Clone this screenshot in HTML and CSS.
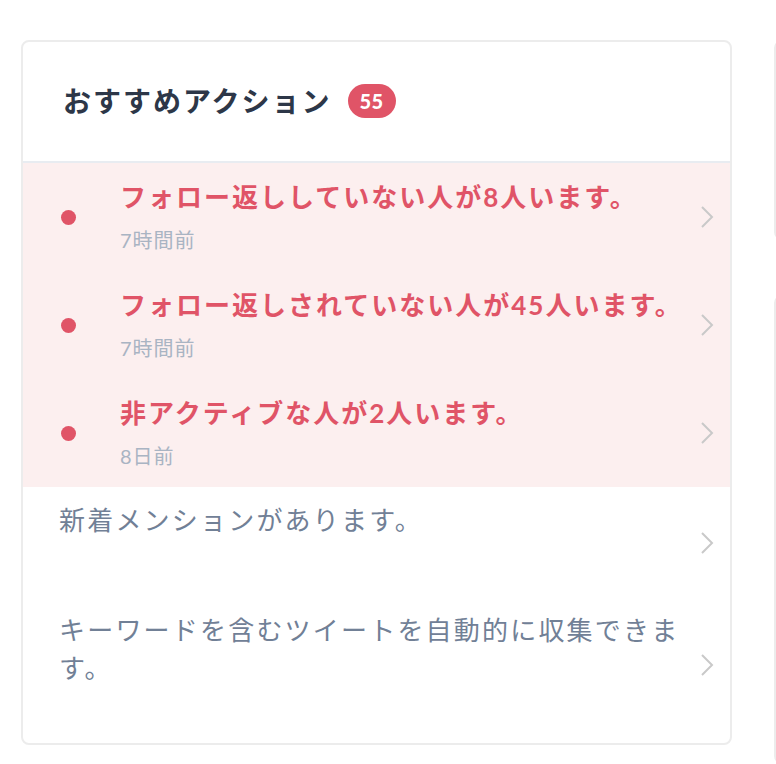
FILE: index.html
```html
<!DOCTYPE html>
<html lang="ja">
<head>
<meta charset="utf-8">
<link rel="stylesheet" href="styles.css">
</head>
<body>
<div class="page">
  <section class="card main">
    <header class="card-head">
      <h2 class="card-title">おすすめアクション</h2>
      <span class="badge">55</span>
    </header>
    <ul class="list">
      <li class="item alert">
        <span class="dot"></span>
        <div class="item-body">
          <div class="item-title">フォロー返ししていない人が8人います。</div>
          <div class="item-time">7時間前</div>
        </div>
        <svg class="chev" width="14" height="24" viewBox="0 0 14 24"><polyline points="2,2 12,12 2,22" fill="none" stroke="#c9c9c9" stroke-width="2"/></svg>
      </li>
      <li class="item alert">
        <span class="dot"></span>
        <div class="item-body">
          <div class="item-title">フォロー返しされていない人が45人います。</div>
          <div class="item-time">7時間前</div>
        </div>
        <svg class="chev" width="14" height="24" viewBox="0 0 14 24"><polyline points="2,2 12,12 2,22" fill="none" stroke="#c9c9c9" stroke-width="2"/></svg>
      </li>
      <li class="item alert">
        <span class="dot"></span>
        <div class="item-body">
          <div class="item-title">非アクティブな人が2人います。</div>
          <div class="item-time">8日前</div>
        </div>
        <svg class="chev" width="14" height="24" viewBox="0 0 14 24"><polyline points="2,2 12,12 2,22" fill="none" stroke="#c9c9c9" stroke-width="2"/></svg>
      </li>
      <li class="item plain short">
        <div class="item-text">新着メンションがあります。</div>
        <svg class="chev" width="14" height="24" viewBox="0 0 14 24"><polyline points="2,2 12,12 2,22" fill="none" stroke="#c9c9c9" stroke-width="2"/></svg>
      </li>
      <li class="item plain tall">
        <div class="item-text">キーワードを含むツイートを自動的に収集できます。</div>
        <svg class="chev" width="14" height="24" viewBox="0 0 14 24"><polyline points="2,2 12,12 2,22" fill="none" stroke="#c9c9c9" stroke-width="2"/></svg>
      </li>
    </ul>
  </section>
  <div class="side">
    <section class="card side-top"></section>
    <section class="card side-bottom">
      <div class="side-head"></div>
      <div class="side-body"></div>
    </section>
  </div>
</div>
</body>
</html>
```
FILE: styles.css
```css
* { box-sizing: border-box; }
html, body { margin: 0; padding: 0; background: #ffffff; }
body {
  font-family: Lato, "Noto Sans CJK JP", sans-serif;
  width: 776px;
  height: 764px;
  overflow: hidden;
}
.page {
  display: flex;
  align-items: flex-start;
  gap: 42px;
  padding: 40px 0 0 21px;
  height: 764px;
  overflow: hidden;
}
.card {
  border: 2px solid #ececec;
  border-radius: 8px;
  background: #fff;
  overflow: hidden;
}
.main {
  width: 711px;
  flex: none;
}
.card-head {
  height: 121px;
  border-bottom: 2px solid #e8ecf1;
  display: flex;
  align-items: center;
  padding: 0 0 2px 40px;
}
.card-title {
  margin: 0;
  font-size: 28px;
  font-weight: 700;
  letter-spacing: 2px;
  color: #2d3748;
  line-height: 40px;
}
.badge {
  margin-left: 16px;
  height: 34px;
  min-width: 48px;
  border-radius: 17px;
  background: #e05467;
  color: #fff;
  font-family: Lato, sans-serif;
  font-weight: 900;
  font-size: 20px;
  display: flex;
  align-items: center;
  justify-content: center;
  letter-spacing: 0.5px;
}
.list {
  list-style: none;
  margin: 0;
  padding: 0 0 12px;
}
.item {
  display: flex;
  align-items: center;
  padding-right: 16px;
}
.alert {
  height: 108px;
  background: #fcefef;
  padding-left: 38px;
}
.dot {
  width: 15px;
  height: 15px;
  border-radius: 50%;
  background: #e05467;
  flex: none;
  margin-right: 44px;
}
.item-body {
  flex: 1;
  align-self: flex-start;
  padding-top: 16px;
}
.item-title {
  font-size: 26px;
  font-weight: 700;
  letter-spacing: 2px;
  color: #e05467;
  line-height: 36px;
}
.item-time {
  margin-top: 8px;
  font-size: 20px;
  line-height: 34px;
  letter-spacing: 1px;
  color: #a9b4c3;
}
.chev { flex: none; }
.plain {
  padding-left: 36px;
}
.short { height: 112px; }
.tall { height: 132px; }
.item-text {
  flex: 1;
  align-self: flex-start;
  padding-top: 14px;
  padding-right: 20px;
  font-size: 26px;
  line-height: 38px;
  letter-spacing: 2.2px;
  color: #718096;
}
.tall .item-text { padding-top: 12px; }
.side {
  display: flex;
  flex-direction: column;
  gap: 55px;
  width: 400px;
  flex: none;
}
.side-top { height: 200px; }
.side-bottom { height: 469px; display: flex; flex-direction: column; }
.side-head { height: 119px; border-bottom: 2px solid #e8ecf1; }
.side-body { flex: 1; background: #f7f9fb; }
```
